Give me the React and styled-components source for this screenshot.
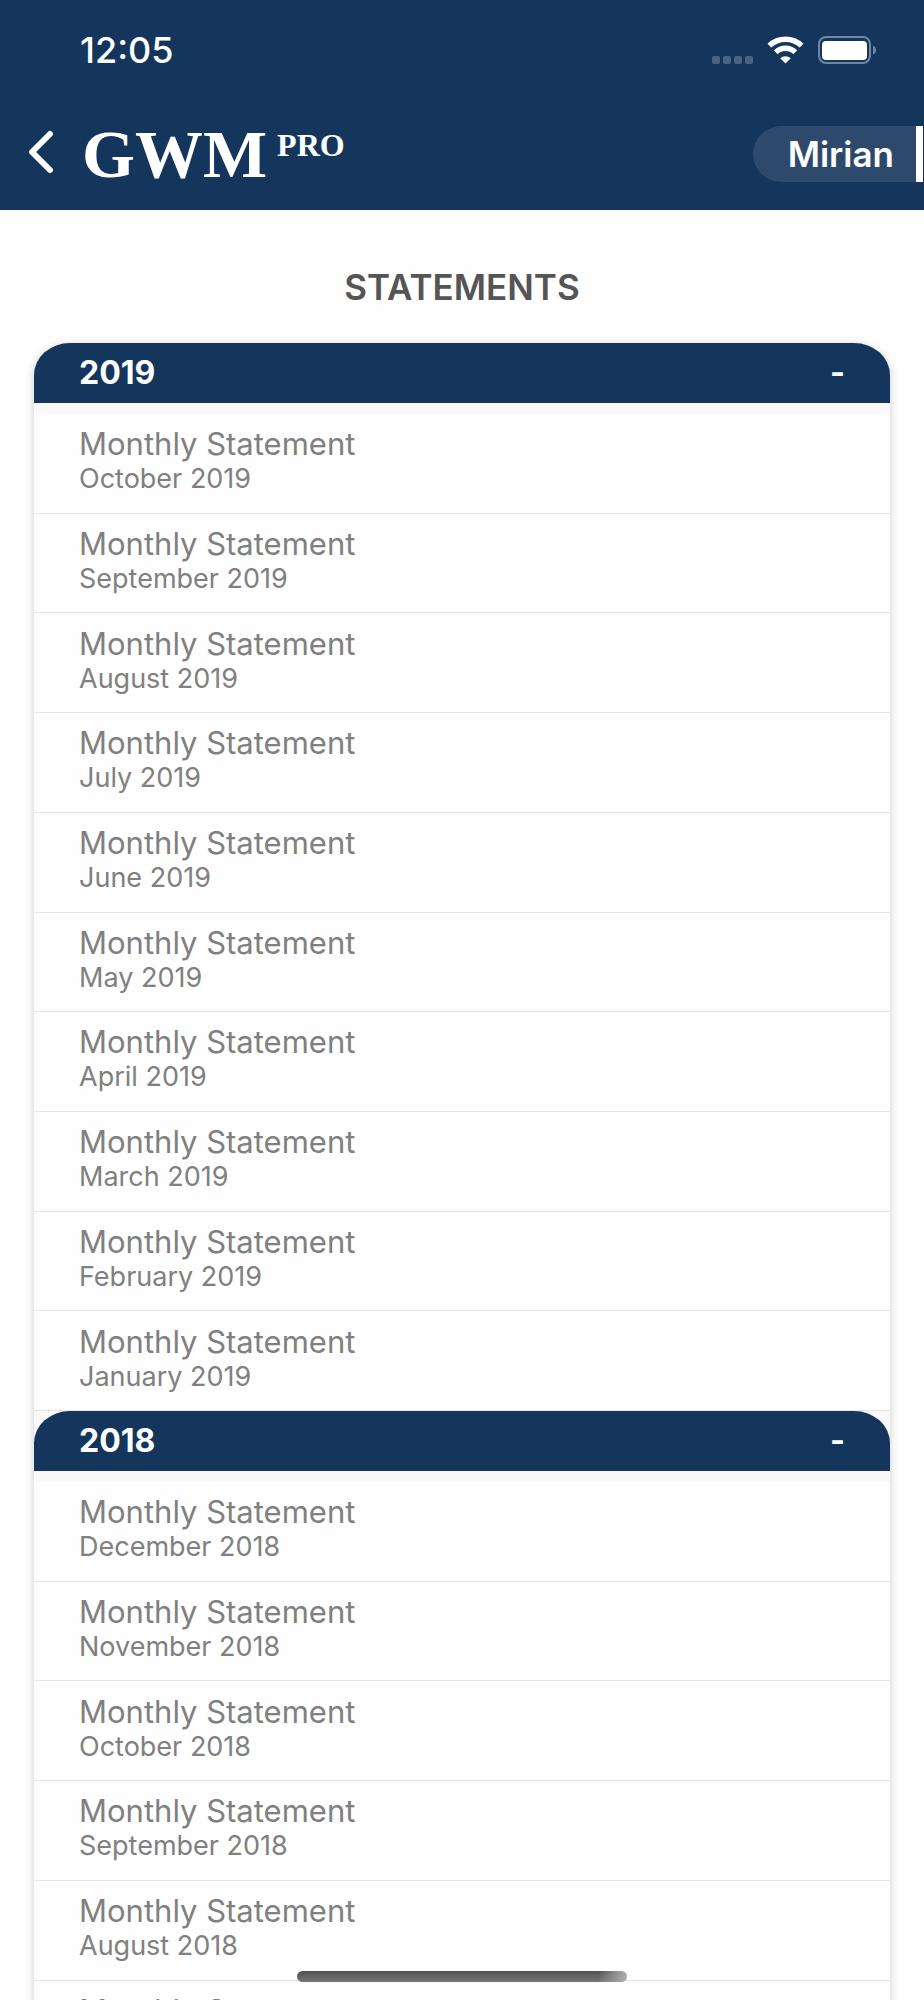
import { useState } from "react";
import styled, { createGlobalStyle } from "styled-components";

const GlobalStyle = createGlobalStyle`
  * {
    box-sizing: border-box;
  }
  body {
    margin: 0;
    background: #fefefe;
    font-family: Inter, "Liberation Sans", sans-serif;
  }
  button {
    border: 0;
    padding: 0;
    background: none;
    color: inherit;
    font-family: inherit;
    cursor: pointer;
  }
`

const Screen = styled.div`
  height: 100vh;
  overflow: hidden;
`

const Header = styled.header`
  background: #14365d;
  color: #fff;
`

const StatusBar = styled.div`
  display: flex;
  align-items: center;
  justify-content: space-between;
  height: 100px;
  padding: 0 48px 0 80px;
`

const Time = styled.time`
  font-size: 36px;
  line-height: 42px;
  font-weight: 500;
`

const StatusIcons = styled.div`
  display: flex;
  align-items: center;
  gap: 14px;
`

const NavBar = styled.nav`
  display: flex;
  align-items: center;
  height: 110px;
  padding: 0 1px 2px 28px;
`

const BackButton = styled.button`
  display: flex;
  margin-right: 26px;
  padding-bottom: 4px;
`

const Logo = styled.a`
  display: flex;
  align-items: flex-start;
  gap: 10px;
  margin-right: auto;
  color: #fff;
  text-decoration: none;
  font-family: "Liberation Serif", serif;
  font-weight: bold;
`

const LogoName = styled.span`
  font-size: 68px;
  line-height: 66px;
`

const LogoPro = styled.span`
  font-size: 32px;
  line-height: 48px;
`

const UserButton = styled.button`
  height: 56px;
  padding: 0 22px 0 35px;
  border-right: 7px solid #fff;
  border-radius: 28px 0 0 28px;
  background: #2d4a6c;
  font-size: 35px;
  line-height: 42px;
  font-weight: 600;
`

const Title = styled.h1`
  margin: 0;
  padding: 56px 0 35px;
  color: #555;
  font-size: 35px;
  line-height: 42px;
  font-weight: 600;
  text-align: center;
`

const Card = styled.main`
  margin: 0 34px;
  border-radius: 36px 36px 0 0 / 32px 32px 0 0;
  background: #f9f9f9;
  box-shadow: 0 2px 10px rgba(0, 0, 0, 0.2);
`

const YearHeading = styled.h2`
  margin: 0;
`

const YearButton = styled.button`
  display: flex;
  align-items: center;
  justify-content: space-between;
  width: 100%;
  height: 60px;
  padding: 0 45px;
  border-radius: 36px 36px 0 0 / 32px 32px 0 0;
  background: #14365d;
  color: #fff;
  font-size: 32px;
  line-height: 36px;
  font-weight: 700;
`

const StatementList = styled.ul`
  margin: 0;
  padding: 11px 0 0;
  list-style: none;
`

const StatementRow = styled.li`
  padding: 1vw 45px 2vw;
  border-bottom: 1px solid #e6e6e6;
  background: #fefefe;
  color: #808080;
`

const StatementName = styled.div`
  font-size: 31px;
  line-height: 41px;
`

const StatementDate = styled.div`
  font-size: 27px;
  line-height: 30px;
`

const HomeIndicator = styled.div`
  position: fixed;
  bottom: 18px;
  left: 50%;
  width: 330px;
  height: 11px;
  margin-left: -165px;
  border-radius: 6px;
  background:
    linear-gradient(100deg, transparent 91%, #aaa 99%),
    linear-gradient(#505350, #757575);
`

const years = [
    {
        year: 2019,
        months: ["October", "September", "August", "July", "June", "May", "April", "March", "February", "January"]
    },
    {
        year: 2018,
        months: ["December", "November", "October", "September", "August", "July"]
    }
]

function SignalDots() {
    return (
        <svg width="41" height="28" viewBox="0 0 41 28" fill="#4a6584" aria-hidden="true">
            {[0, 11, 22, 33].map(x => (
                <rect key={x} x={x} y="20" width="8" height="8" rx="2"/>
            ))}
        </svg>
    )
}

function Wifi() {
    return (
        <svg width="37" height="28" viewBox="0 0 37 28" aria-hidden="true">
            <g fill="none" stroke="#fff" strokeWidth="5.4">
                <path d="M2.4 9.6A23.5 23.5 0 0 1 34.6 9.6"/>
                <path d="M8.7 16.2A14.2 14.2 0 0 1 28.3 16.2"/>
            </g>
            <path d="M18.5 27.5L13.2 22.3A7.7 7.7 0 0 1 23.8 22.3Z" fill="#fff"/>
        </svg>
    )
}

function Battery() {
    return (
        <svg width="58" height="28" viewBox="0 0 58 28" aria-hidden="true">
            <rect x="1" y="1" width="51" height="26" rx="7" fill="none" stroke="#7186a0" strokeWidth="2"/>
            <rect x="4" y="5" width="45" height="19" rx="4" fill="#fff"/>
            <path d="M55 9.5C59 11 59 17 55 18.5Z" fill="#7186a0"/>
        </svg>
    )
}

function YearSection({ year, months }) {
    const [open, setOpen] = useState(true)

    return (
        <section>
            <YearHeading>
                <YearButton aria-expanded={open} onClick={() => setOpen(!open)}>
                    <span>{year}</span>
                    <span>{open ? "-" : "+"}</span>
                </YearButton>
            </YearHeading>
            {open && (
                <StatementList>
                    {months.map(month => (
                        <StatementRow key={month}>
                            <StatementName>Monthly Statement</StatementName>
                            <StatementDate>{month} {year}</StatementDate>
                        </StatementRow>
                    ))}
                </StatementList>
            )}
        </section>
    )
}

function App() {
    return (
        <Screen>
            <GlobalStyle/>
            <Header>
                <StatusBar>
                    <Time>12:05</Time>
                    <StatusIcons>
                        <SignalDots/>
                        <Wifi/>
                        <Battery/>
                    </StatusIcons>
                </StatusBar>
                <NavBar>
                    <BackButton aria-label="Back">
                        <svg width="28" height="44" viewBox="0 0 28 44" fill="none" stroke="#fff" strokeWidth="6" strokeLinecap="round" strokeLinejoin="round">
                            <path d="M22 4L4 22L22 40"/>
                        </svg>
                    </BackButton>
                    <Logo href="#">
                        <LogoName>GWM</LogoName>
                        <LogoPro>PRO</LogoPro>
                    </Logo>
                    <UserButton>Mirian</UserButton>
                </NavBar>
            </Header>
            <Title>STATEMENTS</Title>
            <Card>
                {years.map(item => (
                    <YearSection key={item.year} year={item.year} months={item.months}/>
                ))}
            </Card>
            <HomeIndicator/>
        </Screen>
    )
}

export default App
